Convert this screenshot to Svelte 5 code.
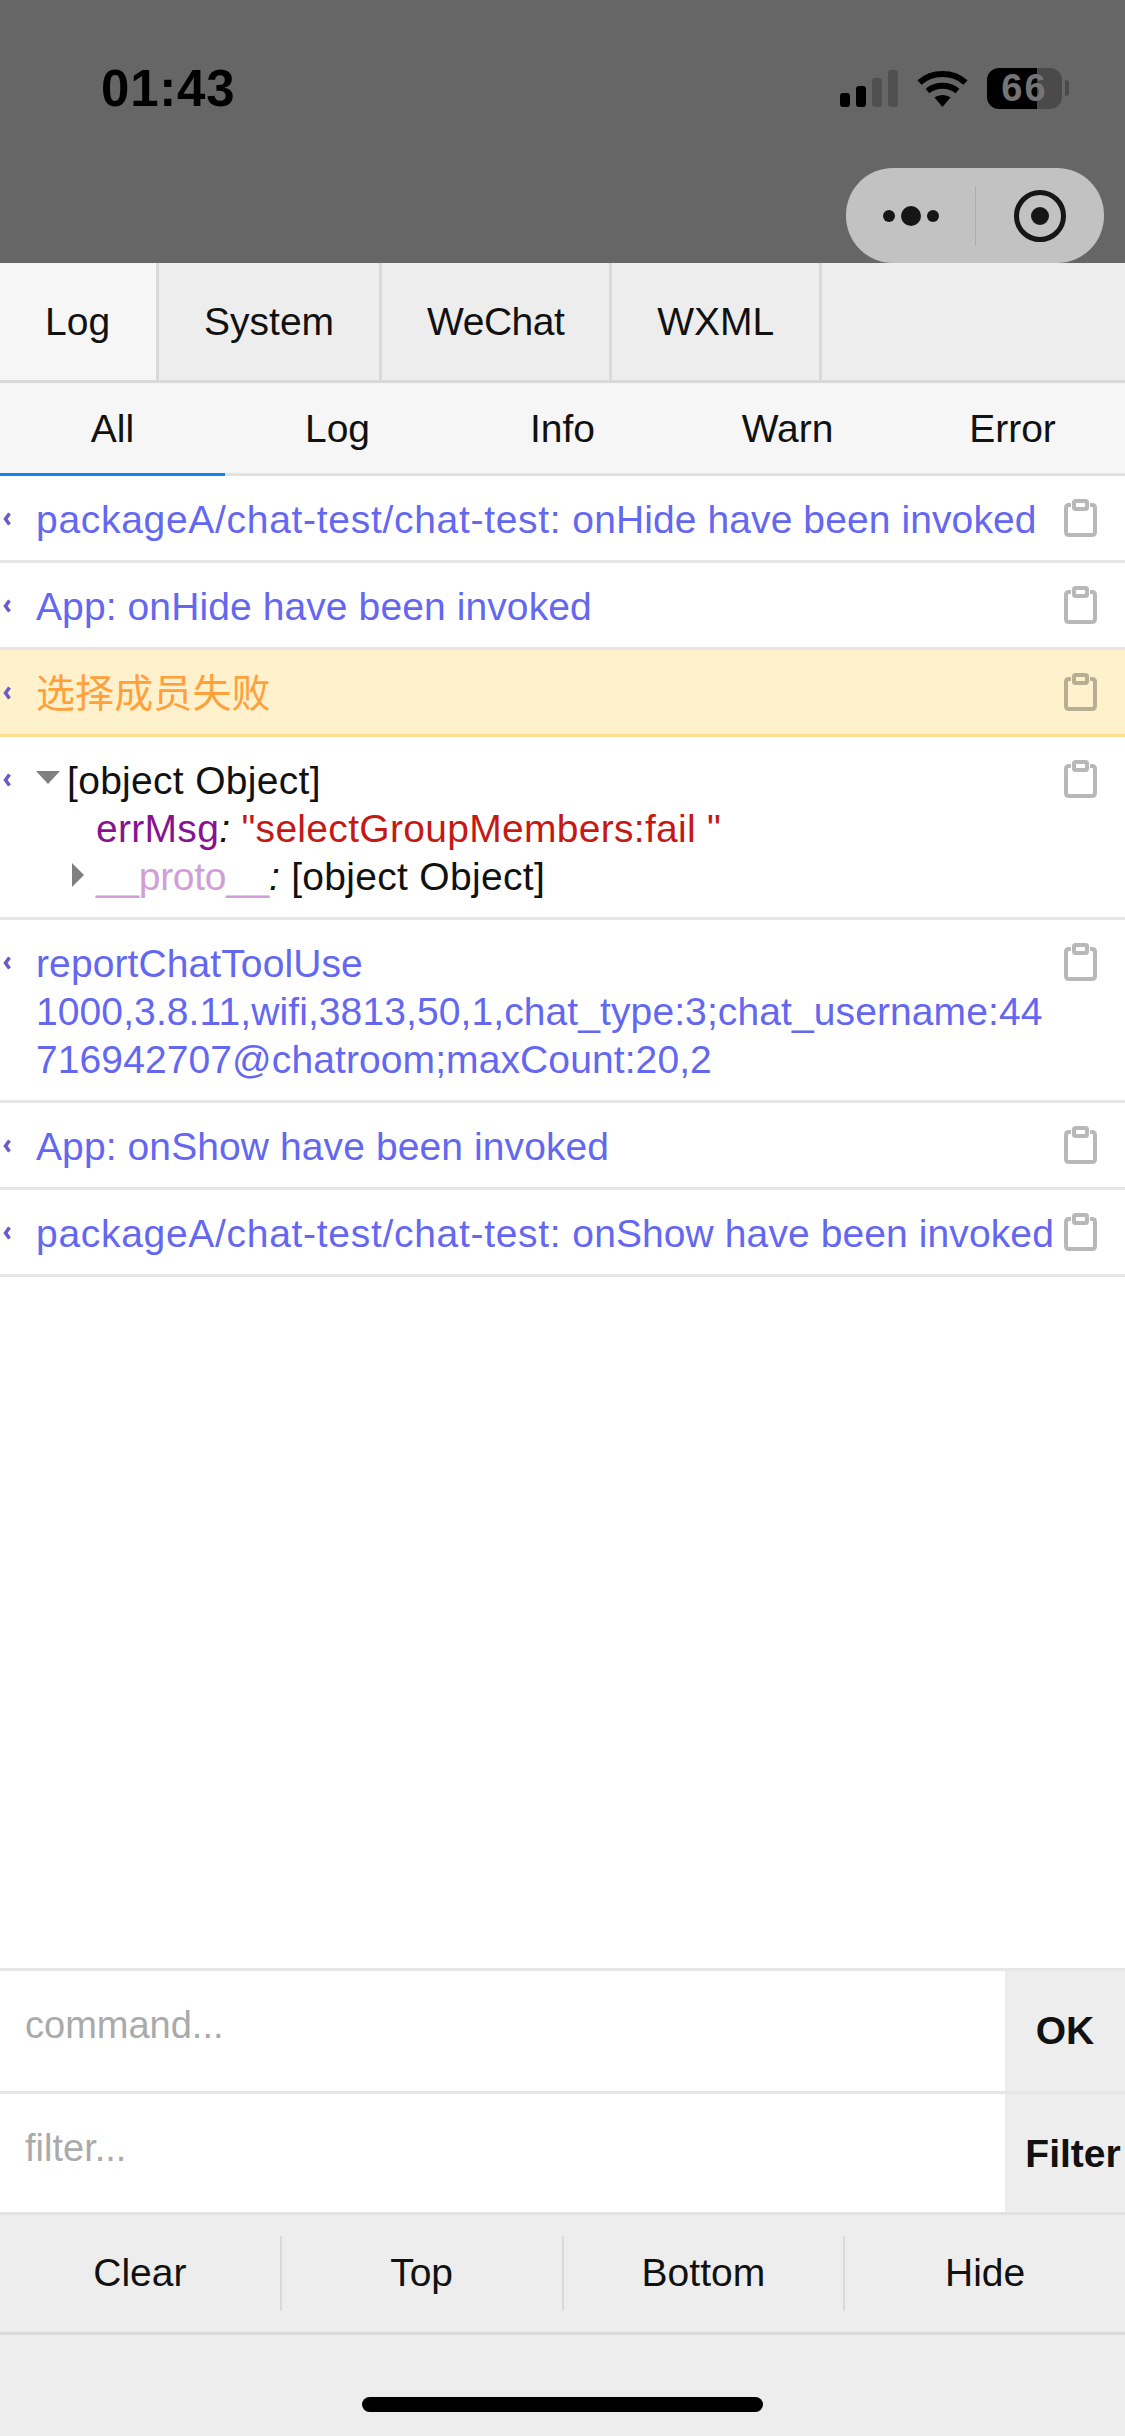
<script>
  const tabs = ['Log', 'System', 'WeChat', 'WXML']
  const levels = ['All', 'Log', 'Info', 'Warn', 'Error']
  const actions = ['Clear', 'Top', 'Bottom', 'Hide']
</script>

{#snippet copyIcon()}
  <svg class="copy" width="33" height="38" viewBox="0 0 33 38" aria-hidden="true">
    <path d="M7 6H5Q2 6 2 9V33Q2 36 5 36H28Q31 36 31 33V9Q31 6 28 6H26" fill="none" stroke="currentColor" stroke-width="4" />
    <rect x="10" y="2" width="13" height="8" rx="1.500" fill="none" stroke="currentColor" stroke-width="4" />
  </svg>
{/snippet}

{#snippet chevron()}
  <svg class="chevron" width="8" height="14" viewBox="0 0 8 14" aria-hidden="true">
    <path d="M6.500 1.500L2.500 7L6.500 12.500" fill="none" stroke="currentColor" stroke-width="3.500" />
  </svg>
{/snippet}

{#snippet row(text, cls = '', path = '')}
  <div class="row {cls}">
    {@render chevron()}
    <span class="msg">{#if path}<span class="path">{path}</span>{' '}{/if}{text}</span>
    {@render copyIcon()}
  </div>
{/snippet}

<div class="page">
  <header class="top">
    <div class="status">
      <span class="time">01:43</span>
      <div class="status-icons">
        <div class="signal">
          <i class="b1"></i><i class="b2"></i><i class="b3 off"></i><i class="b4 off"></i>
        </div>
        <svg class="wifi" width="51" height="37" viewBox="0 0 51 37" aria-hidden="true">
          <path d="M2.500 12.500C15 1 36 1 48.500 12.500" fill="none" stroke="#000" stroke-width="6" />
          <path d="M10.500 21C19 14 32 14 40.500 21" fill="none" stroke="#000" stroke-width="6" />
          <path d="M17.500 27.500C22 24 29 24 33.500 27.500L25.500 37Z" fill="#000" />
        </svg>
        <div class="battery"><span>66</span></div>
        <i class="nib"></i>
      </div>
    </div>
    <div class="capsule">
      <svg class="dots" width="56" height="22" viewBox="0 0 56 22" aria-hidden="true">
        <circle cx="6" cy="11" r="6" fill="#161616" />
        <circle cx="28" cy="11" r="10" fill="#161616" />
        <circle cx="50" cy="11" r="6" fill="#161616" />
      </svg>
      <i class="capsule-line"></i>
      <svg class="target" width="52" height="52" viewBox="0 0 52 52" aria-hidden="true">
        <circle cx="26" cy="26" r="23.500" fill="none" stroke="#161616" stroke-width="5" />
        <circle cx="26" cy="26" r="9" fill="#161616" />
      </svg>
    </div>
  </header>

  <nav class="tabs">
    {#each tabs as tab, i}
      <div class="tab" class:active={i === 0}>{tab}</div>
    {/each}
  </nav>

  <nav class="levels">
    {#each levels as level, i}
      <div class="level" class:active={i === 0}>{level}</div>
    {/each}
  </nav>

  <main class="logs">
    {@render row('onHide have been invoked', '', 'packageA/chat-test/chat-test:')}
    {@render row('App: onHide have been invoked')}
    {@render row('选择成员失败', 'warn')}

    <div class="row plain">
      {@render chevron()}
      <div class="tree">
        <div class="tree-head"><i class="tri-down"></i>[object Object]</div>
        <div class="tree-item"><span class="key">errMsg</span><em>:</em> <span class="str">"selectGroupMembers:fail "</span></div>
        <div class="tree-item"><i class="tri-right"></i><span class="proto">__proto__</span><em>:</em> [object Object]</div>
      </div>
      {@render copyIcon()}
    </div>

    {@render row('reportChatToolUse 1000,3.8.11,wifi,3813,50,1,chat_type:3;chat_username:44716942707@chatroom;maxCount:20,2', 'wrap')}
    {@render row('App: onShow have been invoked')}
    {@render row('onShow have been invoked', '', 'packageA/chat-test/chat-test:')}
  </main>

  <div class="cmd">
    <div class="cmd-input">command...</div>
    <div class="cmd-btn">OK</div>
  </div>
  <div class="cmd">
    <div class="cmd-input">filter...</div>
    <div class="cmd-btn filter">Filter</div>
  </div>

  <div class="actions">
    {#each actions as action}
      <div class="action">{action}</div>
    {/each}
  </div>

  <footer class="safe"><i class="home"></i></footer>
</div>

<style>
  :global(body) {
    margin: 0;
    background: #fff;
  }

  .page {
    width: 1125px;
    height: 2436px;
    display: flex;
    flex-direction: column;
    overflow: hidden;
    font-family: "Liberation Sans", "Noto Sans CJK SC", sans-serif;
    font-size: 39px;
    color: #111;
  }

  i {
    display: block;
  }

  /* status bar + capsule */
  .top {
    height: 263px;
    flex: none;
    box-sizing: border-box;
    background: #666;
    display: flex;
    flex-direction: column;
    align-items: stretch;
    padding-top: 68px;
  }

  .status {
    height: 41px;
    display: flex;
    justify-content: space-between;
    align-items: center;
    padding: 0 56px 0 101px;
  }

  .time {
    font-size: 51px;
    font-weight: 700;
    color: #000;
    letter-spacing: 0.8px;
    line-height: 41px;
  }

  .status-icons {
    display: flex;
    align-items: flex-end;
    height: 41px;
  }

  .signal {
    display: flex;
    align-items: flex-end;
    gap: 6px;
    margin-right: 19px;
    padding-bottom: 2px;
  }

  .signal i {
    width: 10px;
    border-radius: 3px;
    background: #000;
  }

  .signal .off {
    background: #505050;
  }

  .b1 { height: 14px; }
  .b2 { height: 21px; }
  .b3 { height: 29px; }
  .b4 { height: 37px; }

  .wifi {
    margin-right: 19px;
    margin-bottom: 2px;
  }

  .battery {
    width: 75px;
    height: 41px;
    border-radius: 12px;
    background: linear-gradient(90deg, #000 50px, #4a4a4a 50px);
    display: flex;
    align-items: center;
    justify-content: center;
  }

  .battery span {
    font-size: 38px;
    font-weight: 700;
    letter-spacing: 2px;
    color: #747474;
    line-height: 41px;
  }

  .nib {
    width: 4px;
    height: 16px;
    margin: 0 0 13px 3px;
    border-radius: 0 8px 8px 0;
    background: #4a4a4a;
  }

  .capsule {
    align-self: flex-end;
    margin: 59px 21px 0 0;
    width: 258px;
    height: 95px;
    flex: none;
    border-radius: 47px;
    background: #c2c2c2;
    display: flex;
    align-items: center;
  }

  .dots {
    margin-left: 37px;
  }

  .capsule-line {
    width: 1px;
    height: 60px;
    margin-left: 36px;
    background: #adadad;
  }

  .target {
    margin-left: 38px;
  }

  /* tabs */
  .tabs {
    height: 120px;
    flex: none;
    box-sizing: border-box;
    display: flex;
    background: #ededed;
    border-bottom: 3px solid #d9d9d9;
  }

  .tab {
    padding: 0 45px;
    border-right: 3px solid #d9d9d9;
    line-height: 117px;
  }

  .tab.active {
    background: #f6f6f6;
    padding-right: 46px;
  }

  .tab:nth-child(3) {
    letter-spacing: -0.5px;
  }

  .levels {
    height: 93px;
    flex: none;
    box-sizing: border-box;
    display: flex;
    background: #f6f6f6;
    border-bottom: 3px solid #e2e2e2;
  }

  .level {
    flex: 1;
    height: 93px;
    box-sizing: border-box;
    text-align: center;
    line-height: 92px;
  }

  .level.active {
    border-bottom: 3px solid #1485ee;
  }

  /* log rows */
  .logs {
    flex: 1;
    min-height: 0;
  }

  .row {
    position: relative;
    box-sizing: border-box;
    min-height: 87px;
    padding: 20px 0 16px 36px;
    border-bottom: 3px solid #e6e6e6;
    line-height: 48px;
    letter-spacing: 0.1px;
    color: #6467f0;
  }

  .msg {
    display: block;
    white-space: nowrap;
  }

  .path {
    letter-spacing: 0.7px;
  }

  .wrap .msg {
    white-space: normal;
    width: 1020px;
    overflow-wrap: anywhere;
  }

  .chevron {
    position: absolute;
    left: 3px;
    top: 36px;
    color: #6a5acd;
  }

  .copy {
    position: absolute;
    right: 28px;
    top: 23px;
    color: #b8b8b8;
  }

  .warn {
    background: #fff1cc;
    border-bottom-color: #ffde8f;
    color: #ffa03b;
  }

  .warn .copy {
    color: #b8ae94;
  }

  .plain {
    color: #111;
  }

  .tree {
    line-height: 48px;
    letter-spacing: 0.3px;
  }

  .tree-head {
    display: flex;
    align-items: center;
  }

  .tri-down {
    width: 0;
    height: 0;
    margin: 0 7px 8px 0;
    border-left: 12px solid transparent;
    border-right: 12px solid transparent;
    border-top: 13px solid #808080;
  }

  .tree-item {
    position: relative;
    padding-left: 60px;
  }

  .tri-right {
    position: absolute;
    left: 36px;
    top: 10px;
    width: 0;
    height: 0;
    border-top: 12px solid transparent;
    border-bottom: 12px solid transparent;
    border-left: 12px solid #808080;
  }

  .key {
    color: #881391;
  }

  .str {
    color: #c41a16;
  }

  .proto {
    color: #cf9fd6;
    letter-spacing: -0.3px;
  }

  /* command + filter */
  .cmd {
    height: 123px;
    flex: none;
    box-sizing: border-box;
    display: flex;
    border-top: 3px solid #e6e6e6;
  }

  .cmd + .cmd {
    height: 121px;
  }

  .cmd-input {
    flex: 1;
    padding: 30px 0 0 25px;
    line-height: 48px;
    font-size: 38px;
    color: #aaa;
  }

  .cmd-btn {
    width: 120px;
    box-sizing: border-box;
    background: #ededed;
    display: flex;
    justify-content: center;
    align-items: center;
    font-weight: 700;
    white-space: nowrap;
  }

  .cmd-btn.filter {
    padding: 2px 0 0 16px;
  }

  .actions {
    height: 123px;
    flex: none;
    box-sizing: border-box;
    display: flex;
    align-items: center;
    background: #ededed;
    border-top: 3px solid #e2e2e2;
    border-bottom: 3px solid #d9d9d9;
  }

  .action {
    flex: 1;
    height: 75px;
    line-height: 74px;
    text-align: center;
    border-right: 2px solid #d9d9d9;
  }

  .action:last-child {
    border-right: 0;
  }

  .safe {
    flex: none;
    height: 101px;
    background: #ededed;
    display: flex;
    justify-content: center;
    box-sizing: border-box;
    padding-top: 62px;
  }

  .home {
    width: 401px;
    height: 15px;
    border-radius: 8px;
    background: #000;
  }
</style>
